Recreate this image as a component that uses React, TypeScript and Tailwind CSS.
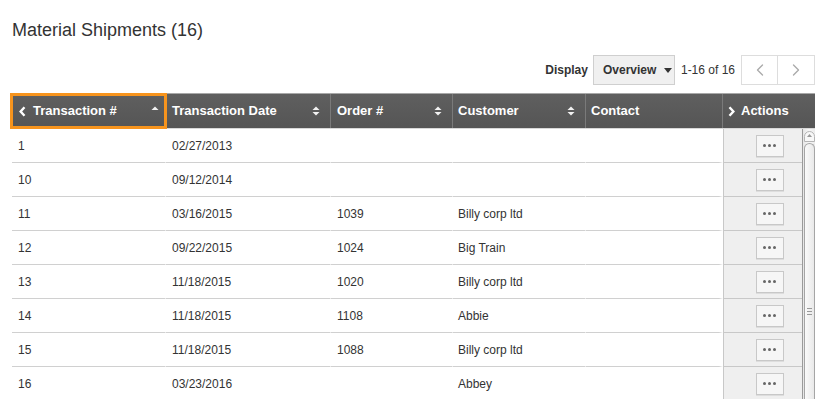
import { ChevronLeft, ChevronRight } from 'lucide-react'

const rows = [
  { id: '1', date: '02/27/2013', order: '', customer: '' },
  { id: '10', date: '09/12/2014', order: '', customer: '' },
  { id: '11', date: '03/16/2015', order: '1039', customer: 'Billy corp ltd' },
  { id: '12', date: '09/22/2015', order: '1024', customer: 'Big Train' },
  { id: '13', date: '11/18/2015', order: '1020', customer: 'Billy corp ltd' },
  { id: '14', date: '11/18/2015', order: '1108', customer: 'Abbie' },
  { id: '15', date: '11/18/2015', order: '1088', customer: 'Billy corp ltd' },
  { id: '16', date: '03/23/2016', order: '', customer: 'Abbey' },
]

function SortIcon({ upOnly = false }: { upOnly?: boolean }) {
  return (
    <svg width="8" height="10" viewBox="0 0 8 10" className="shrink-0">
      <path d="M0.5 4 L4 0.5 L7.5 4 Z" fill="#f2f2f2" />
      {!upOnly && <path d="M0.5 6 L4 9.5 L7.5 6 Z" fill="#f2f2f2" />}
    </svg>
  )
}

// small bold chevron used in the header
function Chev({ dir }: { dir: 'left' | 'right' }) {
  return (
    <svg width="7" height="11" viewBox="0 0 7 11" className="shrink-0">
      <path
        d={dir === 'left' ? 'M5.5 1.2 L1.6 5.5 L5.5 9.8' : 'M1.5 1.2 L5.4 5.5 L1.5 9.8'}
        fill="none"
        stroke="#fff"
        strokeWidth="2.4"
      />
    </svg>
  )
}

function Dots() {
  return (
    <div className="w-[28px] h-[22px] border border-[#c8c8c8] bg-[#f6f6f6] shadow-[0_1px_0_#ddd] flex items-center justify-center gap-[2px]">
      <span className="w-[3px] h-[3px] rounded-full bg-[#666]" />
      <span className="w-[3px] h-[3px] rounded-full bg-[#666]" />
      <span className="w-[3px] h-[3px] rounded-full bg-[#666]" />
    </div>
  )
}

export default function App() {
  return (
    <div className="w-[820px] h-[399px] overflow-hidden bg-white font-['Liberation_Sans',Arial,sans-serif] text-[#333] pl-3 pr-[5px]">
      <h1 className="pt-[19px] text-[18px] leading-[22px] text-[#333]">Material Shipments (16)</h1>

      {/* toolbar */}
      <div className="mt-[14px] h-[30px] flex justify-end items-center text-[12px]">
        <span className="font-bold mr-[5px]">Display</span>
        <div className="h-[30px] w-[82px] border border-[#cfcfcf] bg-[#f0f0f0] flex items-center pl-[9px] gap-[8px] font-bold">
          Overview
          <svg width="8" height="5" viewBox="0 0 8 5"><path d="M0 0 L8 0 L4 5 Z" fill="#333" /></svg>
        </div>
        <span className="ml-[6px] mr-[6px]">1-16 of 16</span>
        <div className="flex h-[30px] border border-[#ddd] bg-white">
          <div className="w-[36px] flex items-center justify-center border-r border-[#ddd]">
            <ChevronLeft size={20} strokeWidth={1.6} color="#aaa" />
          </div>
          <div className="w-[36px] flex items-center justify-center">
            <ChevronRight size={20} strokeWidth={1.6} color="#aaa" />
          </div>
        </div>
      </div>

      {/* table */}
      <div className="mt-2 relative">
        <div className="flex h-[36px] border-t border-[#a8a8a8] border-b border-b-[#d8d8d8] bg-gradient-to-b from-[#5f5f5f] to-[#555] text-white text-[13px] font-bold">
          <div className="relative w-[154px] flex items-center pl-[7px] pr-[6px] border-r border-[#7a7a7a]">
            <Chev dir="left" />
            <span className="flex-1 ml-[7px]">Transaction #</span>
            <SortIcon upOnly />
            <div className="absolute -left-[2px] -top-px w-[157px] h-[36px] border-[3px] border-[#f7941d]" />
          </div>
          <div className="w-[165px] flex items-center pl-[6px] pr-[10px] border-r border-[#7a7a7a]">
            <span className="flex-1">Transaction Date</span>
            <SortIcon />
          </div>
          <div className="w-[122px] flex items-center pl-[6px] pr-[10px] border-r border-[#7a7a7a]">
            <span className="flex-1">Order #</span>
            <SortIcon />
          </div>
          <div className="w-[133px] flex items-center pl-[5px] pr-[10px] border-r border-[#7a7a7a]">
            <span className="flex-1">Customer</span>
            <SortIcon />
          </div>
          <div className="w-[137px] flex items-center pl-[5px] border-r border-[#7a7a7a]">
            <span>Contact</span>
          </div>
          <div className="w-[92px] flex items-center pl-[5px]">
            <Chev dir="right" />
            <span className="ml-[6px]">Actions</span>
          </div>
        </div>

        <div className="relative h-[272px] overflow-hidden text-[12px]">
          {rows.map((r) => (
            <div key={r.id} className="flex h-[34px]">
              <div className="w-[154px] flex items-center pl-[6px] pt-px border-b border-b-[#d0d0d0] border-r border-r-white">{r.id}</div>
              <div className="w-[165px] flex items-center pl-[6px] pt-px border-b border-b-[#d0d0d0] border-r border-r-white">{r.date}</div>
              <div className="w-[122px] flex items-center pl-[6px] pt-px border-b border-b-[#d0d0d0] border-r border-r-white">{r.order}</div>
              <div className="w-[133px] flex items-center pl-[5px] pt-px border-b border-b-[#d0d0d0] border-r border-r-white">{r.customer}</div>
              <div className="w-[137px] border-b border-b-[#d0d0d0] border-r-4 border-r-white" />
              <div className="w-[92px] flex items-center justify-center bg-[#efefef] border-l border-[#c8c8c8] border-b border-b-[#c8c8c8]">
                <Dots />
              </div>
            </div>
          ))}

          {/* scrollbar */}
          <div className="absolute right-0 top-0 bottom-0 w-[13px] border-l border-[#9a9a9a] bg-gradient-to-r from-[#e6e6e6] via-[#f7f7f7] to-[#ececec] flex flex-col items-center">
            <div className="mt-[2px] w-[11px] h-[11px] rounded-t-full border border-[#b5b5b5] bg-[#f8f8f8] flex items-start justify-center pt-[2px]">
              <svg width="5" height="3" viewBox="0 0 5 3"><path d="M0 3 L2.5 0 L5 3 Z" fill="#999" /></svg>
            </div>
            <div className="mt-[1px] w-[11px] flex-1 rounded-t-full border border-[#a5a5a5] border-b-0 bg-gradient-to-r from-[#fafafa] to-[#e9e9e9] flex flex-col items-center pt-[164px] gap-[2px]">
              <span className="w-[5px] h-px bg-[#999]" />
              <span className="w-[5px] h-px bg-[#999]" />
              <span className="w-[5px] h-px bg-[#999]" />
            </div>
          </div>
        </div>
      </div>
    </div>
  )
}
